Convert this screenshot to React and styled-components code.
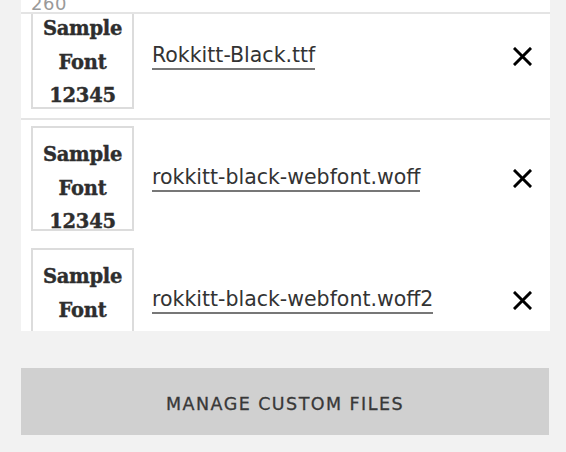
import styled, { createGlobalStyle } from "styled-components";

const GlobalStyle = createGlobalStyle`
  html, body {
    margin: 0;
    padding: 0;
    background: #f2f2f2;
  }
`;

const Page = styled.div`
  width: 566px;
  height: 452px;
  padding: 0 16px 0 21px;
  box-sizing: border-box;
  display: flex;
  flex-direction: column;
  gap: 37px;
  overflow: hidden;
`;

const Panel = styled.div`
  position: relative;
  width: 529px;
  height: 331px;
  background: #fff;
  overflow: hidden;
`;

const StickyHeader = styled.div`
  position: absolute;
  top: 0;
  left: 0;
  right: 0;
  height: 12px;
  background: #fff;
  border-bottom: 2px solid #e4e4e4;
  overflow: hidden;
  z-index: 2;
`;

const Count = styled.span`
  position: absolute;
  left: 10px;
  bottom: -1px;
  font-family: "DejaVu Sans", sans-serif;
  font-size: 18px;
  line-height: 18px;
  letter-spacing: 0.5px;
  color: #9a9a9a;
`;

const List = styled.div`
  display: flex;
  flex-direction: column;
`;

const Row = styled.div`
  display: flex;
  align-items: center;
  padding: ${(p) => p.$pad};
  border-bottom: ${(p) => (p.$divider ? "2px solid #e4e4e4" : "none")};
  padding-left: 10px;
  padding-right: 18px;
`;

const Thumb = styled.div`
  flex: none;
  width: 103px;
  height: 105px;
  box-sizing: border-box;
  border: 2px solid #dcdcdc;
  padding-top: ${(p) => p.$top}px;
  overflow: hidden;
  text-align: center;
  font-family: "DejaVu Serif", serif;
  font-weight: 700;
  font-size: 19.5px;
  line-height: 33.5px;
  color: #2e2e2e;
  letter-spacing: -0.3px;
  -webkit-text-stroke: 0.4px #2e2e2e;
`;

const FileName = styled.a`
  margin-left: 18px;
  font-family: "DejaVu Sans", sans-serif;
  font-size: 20.5px;
  line-height: 24px;
  color: #333;
  text-decoration: none;
  border-bottom: 2px solid #777;
  padding-bottom: 1px;
`;

const Spacer = styled.div`
  flex: 1;
`;

const RemoveButton = styled.button`
  flex: none;
  width: 20px;
  height: 20px;
  padding: 0;
  border: none;
  background: none;
  display: flex;
  align-items: center;
  justify-content: center;
  cursor: pointer;
`;

const ManageButton = styled.button`
  width: 528px;
  height: 67px;
  border: none;
  padding-top: 5px;
  background: #d0d0d0;
  font-family: "DejaVu Sans", sans-serif;
  font-size: 17.5px;
  letter-spacing: 1.45px;
  color: #383838;
  -webkit-text-stroke: 0.3px #383838;
  cursor: pointer;
`;

const files = [
  { name: "Rokkitt-Black.ttf", pad: "4px 0 9px", divider: true, top: 6 },
  { name: "rokkitt-black-webfont.woff", pad: "6px 0 17px", divider: false, top: 10 },
  { name: "rokkitt-black-webfont.woff2", pad: "0 0 17px", divider: false, top: 10 },
];

function CloseIcon() {
  return (
    <svg width="19" height="19" viewBox="0 0 19 19">
      <path d="M2 2 L17 17 M17 2 L2 17" stroke="#000" strokeWidth="3" strokeLinecap="square" />
    </svg>
  );
}

export default function App() {
  return (
    <>
      <GlobalStyle />
      <Page>
        <Panel>
          <StickyHeader>
            <Count>260</Count>
          </StickyHeader>
          <List>
            {files.map((f) => (
              <Row key={f.name} $pad={f.pad} $divider={f.divider}>
                <Thumb $top={f.top}>
                  Sample
                  <br />
                  Font
                  <br />
                  12345
                </Thumb>
                <FileName href="#">{f.name}</FileName>
                <Spacer />
                <RemoveButton aria-label="Remove">
                  <CloseIcon />
                </RemoveButton>
              </Row>
            ))}
          </List>
        </Panel>
        <ManageButton>MANAGE CUSTOM FILES</ManageButton>
      </Page>
    </>
  );
}
